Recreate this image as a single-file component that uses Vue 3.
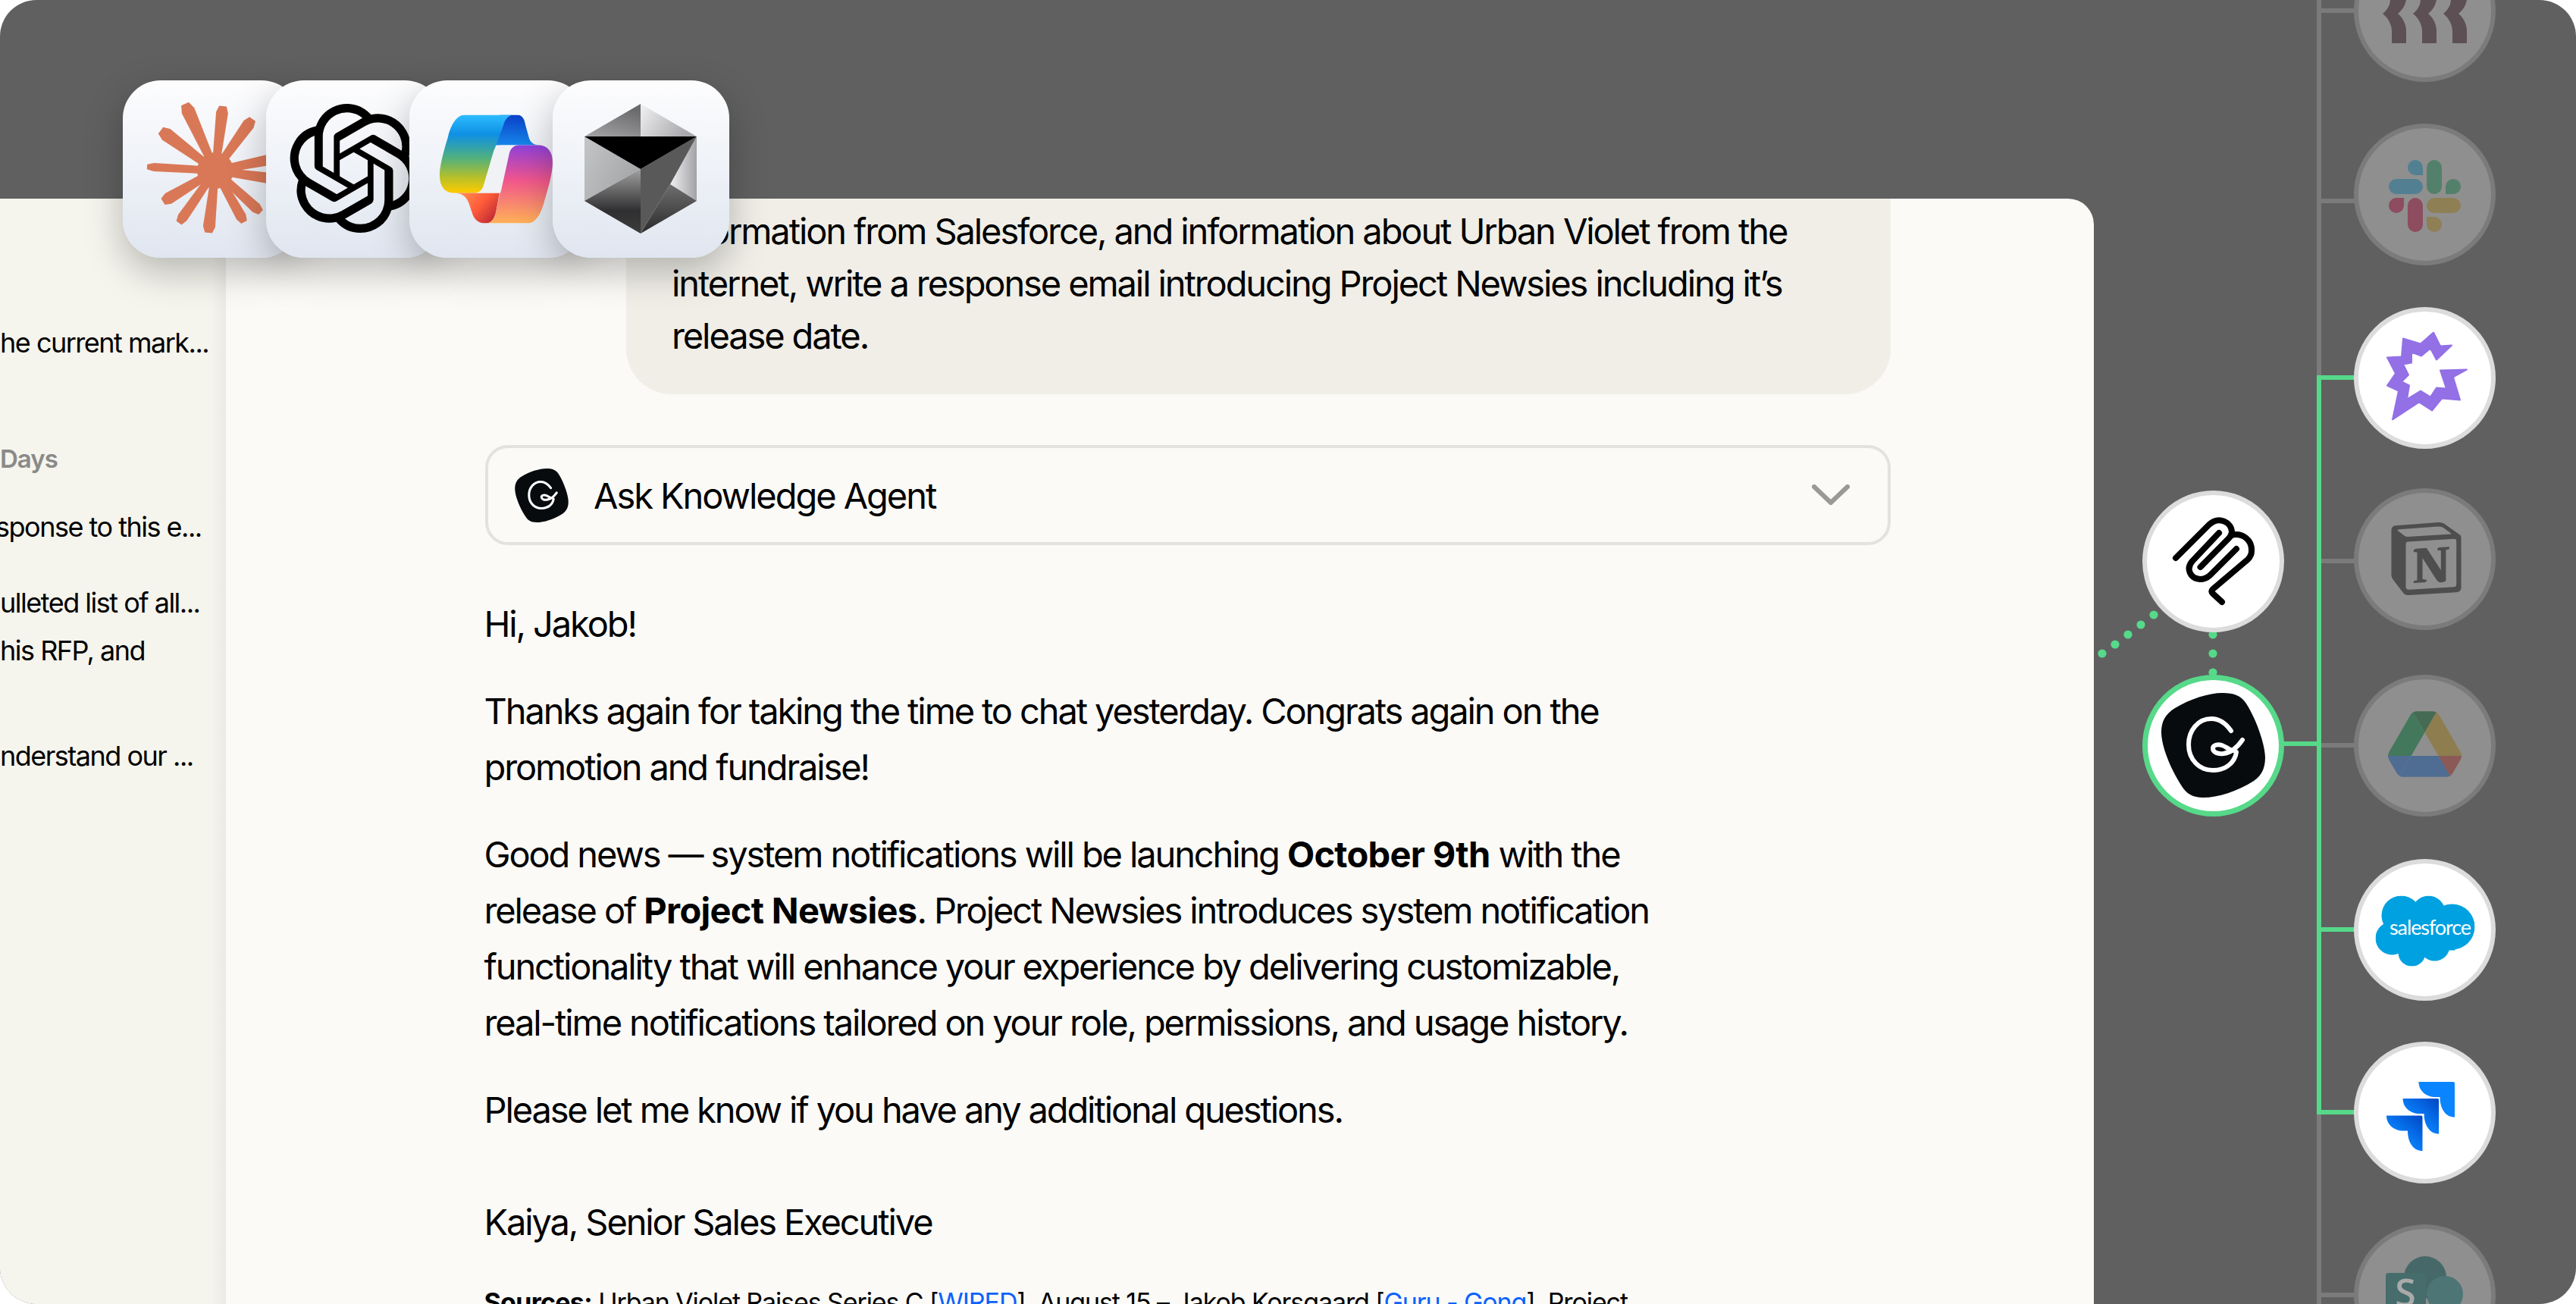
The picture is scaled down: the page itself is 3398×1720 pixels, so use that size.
<script setup>
const claudeTips = [
  [-40, -88, 9], [10, -85, 8], [49, -68, 8], [100, -20, 8], [100, 14, 8], [60, 55, 7], [38, 68, 7],
  [-9, 82, 8], [-48, 69, 7], [-69, 41, 8], [-90, -5, 5.5], [-72, -53, 9]
]
const claudeRays = claudeTips.map(([x, y, w]) => {
  const len = Math.hypot(x, y)
  const nx = -y / len
  const ny = x / len
  const p = (d, k) => `${(x * k + nx * d).toFixed(1)},${(y * k + ny * d).toFixed(1)}`
  return [p(-5, 0.1), p(-w, 0.9), p(-w * 0.6, 1), p(w * 0.6, 1), p(w, 0.9), p(5, 0.1)].join(' ')
})

const nodes = [
  { id: 'rovo', x: 3198, y: 14, dim: true },
  { id: 'slack', x: 3198, y: 256, dim: true },
  { id: 'spark', x: 3198, y: 498 },
  { id: 'notion', x: 3198, y: 737, dim: true },
  { id: 'drive', x: 3198, y: 983, dim: true },
  { id: 'salesforce', x: 3198, y: 1226 },
  { id: 'jira', x: 3198, y: 1467 },
  { id: 'sharepoint', x: 3198, y: 1708, dim: true },
  { id: 'clip', x: 2919, y: 740 },
  { id: 'guru', x: 2919, y: 983, active: true }
]
const nodeStyle = (n) => ({ left: `${n.x - 93.5}px`, top: `${n.y - 93.5}px` })

const greyBranches = [14, 265, 740, 983, 1708]
const vDots = [837, 862, 887]
const dDots = [[2773, 862], [2790, 850], [2807, 837], [2824, 824], [2841, 811]]

const GURU_BLOB = 'M81 0C95 0 105 3 112 14C127 38 137 70 137 85C137 100 132 109 122 116C100 130 75 138 55 138C42 138 33 133 27 123C12 100 0 70 0 52C0 38 5 28 18 20C38 8 62 0 81 0Z'
const GURU_G = 'M92 50C85 40 76 34 66 34C48 34 36 50 36 68C36 88 50 102 68 102C85 102 97 92 99 78M107 62C100 72 92 79 82 80C74 81 68 78 68 73C68 69 74 67 80 69C86 71 90 76 96 76'
</script>

<template>
  <div class="page">
    <div class="window">
      <aside class="sidebar">
        <p class="side-item">he current mark...</p>
        <p class="side-label">Days</p>
        <p class="side-item s2">sponse to this e...</p>
        <p class="side-item s3">ulleted list of all...<br />his RFP, and</p>
        <p class="side-item s4">nderstand our ...</p>
      </aside>
      <main class="main">
        <div class="bubble">
          <p>information from Salesforce, and information about Urban Violet from the internet, write a response email introducing Project Newsies including it’s release date.</p>
        </div>
        <div class="agent">
          <svg class="agent-logo" viewBox="0 0 137 138">
            <path :d="GURU_BLOB" fill="#070b0e" />
            <path :d="GURU_G" fill="none" stroke="#fff" stroke-width="6" stroke-linecap="round" />
          </svg>
          <span class="agent-name">Ask Knowledge Agent</span>
          <svg class="agent-chevron" viewBox="0 0 50 28">
            <path d="M3 3L25 24L47 3" fill="none" stroke="#999997" stroke-width="6" stroke-linecap="round" stroke-linejoin="round" />
          </svg>
        </div>
        <article class="answer">
          <p>Hi, Jakob!</p>
          <p>Thanks again for taking the time to chat yesterday. Congrats again on the promotion and fundraise!</p>
          <p>Good news — system notifications will be launching <b>October 9th</b> with the release of <b>Project Newsies</b>. Project Newsies introduces system notification functionality that will enhance your experience by delivering customizable, real-time notifications tailored on your role, permissions, and usage history.</p>
          <p>Please let me know if you have any additional questions.</p>
          <p class="sign">Kaiya, Senior Sales Executive</p>
          <p class="sources"><b>Sources:</b> Urban Violet Raises Series C [<a>WIRED</a>], August 15 – Jakob Korsgaard [<a>Guru - Gong</a>], Project</p>
        </article>
      </main>
    </div>

    <svg class="wires" width="3398" height="1720" viewBox="0 0 3398 1720">
      <path d="M3059 -5V495M3059 1470V1725" stroke="#7b7b7b" stroke-width="6" fill="none" />
      <path v-for="y in greyBranches" :key="y" :d="`M3062 ${y}H3110`" stroke="#7b7b7b" stroke-width="6" />
      <path d="M3110 498H3059V1467H3110M3059 981H3010M3059 1226H3110" stroke="#56d989" stroke-width="6" fill="none" />
      <circle v-for="y in vDots" :key="y" cx="2919" :cy="y" r="5.6" fill="#56d989" />
      <circle v-for="d in dDots" :key="d[0]" :cx="d[0]" :cy="d[1]" r="5.6" fill="#56d989" />
    </svg>

    <div
      v-for="n in nodes"
      :key="n.id"
      class="node"
      :class="{ dim: n.dim, active: n.active }"
      :style="nodeStyle(n)"
    >
      <svg v-if="n.id === 'rovo'" class="l-rovo" viewBox="0 -2 112 58">
        <path v-for="o in [0, 40, 80]" :key="o" :transform="`translate(${o} 0)`" d="M12 56V40C12 30 6 22 0 17C6 12 10 6 10 -2H31C30 6 26 12 20 17C26 22 31 30 31 40V56Z" fill="#5c5055" />
      </svg>
      <svg v-else-if="n.id === 'slack'" class="l-slack" viewBox="0 0 24 24">
        <path fill="#8d4c5f" d="M5.042 15.165a2.528 2.528 0 0 1-2.52 2.523A2.528 2.528 0 0 1 0 15.165a2.527 2.527 0 0 1 2.522-2.52h2.52v2.52zM6.313 15.165a2.527 2.527 0 0 1 2.521-2.52 2.527 2.527 0 0 1 2.521 2.52v6.313A2.528 2.528 0 0 1 8.834 24a2.528 2.528 0 0 1-2.521-2.522v-6.313z" />
        <path fill="#528092" d="M8.834 5.042a2.528 2.528 0 0 1-2.521-2.52A2.528 2.528 0 0 1 8.834 0a2.528 2.528 0 0 1 2.521 2.522v2.52H8.834zM8.834 6.313a2.528 2.528 0 0 1 2.521 2.521 2.528 2.528 0 0 1-2.521 2.521H2.522A2.528 2.528 0 0 1 0 8.834a2.528 2.528 0 0 1 2.522-2.521h6.312z" />
        <path fill="#53806a" d="M18.956 8.834a2.528 2.528 0 0 1 2.522-2.521A2.528 2.528 0 0 1 24 8.834a2.528 2.528 0 0 1-2.522 2.521h-2.522V8.834zM17.688 8.834a2.528 2.528 0 0 1-2.523 2.521 2.527 2.527 0 0 1-2.52-2.521V2.522A2.527 2.527 0 0 1 15.165 0a2.528 2.528 0 0 1 2.523 2.522v6.312z" />
        <path fill="#8e7f55" d="M15.165 18.956a2.528 2.528 0 0 1 2.523 2.522A2.528 2.528 0 0 1 15.165 24a2.527 2.527 0 0 1-2.52-2.522v-2.522h2.52zM15.165 17.688a2.527 2.527 0 0 1-2.52-2.523 2.526 2.526 0 0 1 2.52-2.52h6.313A2.527 2.527 0 0 1 24 15.165a2.528 2.528 0 0 1-2.522 2.523h-6.313z" />
      </svg>
      <svg v-else-if="n.id === 'spark'" class="l-spark" viewBox="0 0 107 117">
        <path fill="#9370e6" stroke="#9370e6" stroke-width="2" stroke-linejoin="round" d="M62 1L71 19L86 18L66 37L58 22L46 32L33 27L33 41L22 43L29 57L20 66L30 71L27 89L45 78L58 86L66 74L79 75L71 51L106 50L88 60L97 90L73 88L60 104L43 93L8 116L16 78L1 71L12 55L1 34L20 33L22 9L45 16Z" />
      </svg>
      <svg v-else-if="n.id === 'notion'" class="l-notion" viewBox="0 0 24 24">
        <path fill="#4d4e4d" d="M4.459 4.208c.746.606 1.026.56 2.428.466l13.215-.793c.28 0 .047-.28-.046-.326L17.86 1.968c-.42-.326-.981-.7-2.055-.607L3.01 2.295c-.466.046-.56.28-.374.466zm.793 3.08v13.904c0 .747.373 1.027 1.214.98l14.523-.84c.841-.046.935-.56.935-1.167V6.354c0-.606-.233-.933-.748-.887l-15.177.887c-.56.047-.747.327-.747.933zm14.337.745c.093.42 0 .84-.42.888l-.7.14v10.264c-.608.327-1.168.514-1.635.514-.748 0-.935-.234-1.495-.933l-4.577-7.186v6.952L12.21 19s0 .84-1.168.84l-3.222.186c-.093-.186 0-.653.327-.746l.84-.233V9.854L7.822 9.76c-.094-.42.14-1.026.793-1.073l3.456-.233 4.764 7.279v-6.44l-1.215-.139c-.093-.514.28-.887.747-.933zM1.936 1.035l13.31-.98c1.634-.14 2.055-.047 3.082.7l4.249 2.986c.7.513.934.653.934 1.213v16.378c0 1.026-.373 1.634-1.68 1.726l-15.458.934c-.98.047-1.448-.093-1.962-.747l-3.129-4.06c-.56-.747-.793-1.306-.793-1.96V2.667c0-.839.374-1.54 1.447-1.632z" />
      </svg>
      <svg v-else-if="n.id === 'drive'" class="l-drive" viewBox="0 0 87.3 78">
        <path d="m6.6 66.85 3.85 6.65c.8 1.4 1.95 2.5 3.3 3.3l13.75-23.8h-27.5c0 1.55.4 3.1 1.2 4.5z" fill="#4f6d93" />
        <path d="m43.65 25-13.75-23.8c-1.35.8-2.5 1.9-3.3 3.3l-25.4 44a9.06 9.06 0 0 0 -1.2 4.5h27.5z" fill="#43785c" />
        <path d="m73.55 76.8c1.35-.8 2.5-1.9 3.3-3.3l1.6-2.75 7.65-13.25c.8-1.4 1.2-2.95 1.2-4.5h-27.502l5.852 11.5z" fill="#8b5a56" />
        <path d="m43.65 25 13.75-23.8c-1.35-.8-2.9-1.2-4.5-1.2h-18.5c-1.6 0-3.15.45-4.5 1.2z" fill="#466b54" />
        <path d="m59.8 53h-32.3l-13.75 23.8c1.35.8 2.9 1.2 4.5 1.2h50.8c1.6 0 3.15-.45 4.5-1.2z" fill="#4f6d93" />
        <path d="m73.4 26.5-12.7-22c-.8-1.4-1.95-2.5-3.3-3.3l-13.75 23.8 16.15 28h27.45c0-1.55-.4-3.1-1.2-4.5z" fill="#8e7d4f" />
      </svg>
      <svg v-else-if="n.id === 'salesforce'" class="l-sf" viewBox="0 0 131 93">
        <g fill="#00a1e0">
          <circle cx="34" cy="26" r="26" /><circle cx="70" cy="22" r="22" /><circle cx="101" cy="41" r="30" />
          <circle cx="78" cy="66" r="20" /><circle cx="48" cy="75" r="18" /><circle cx="22" cy="56" r="22" />
          <rect x="25" y="22" width="80" height="50" />
        </g>
        <text class="sf-text" x="18.5" y="51">salesforce</text>
      </svg>
      <svg v-else-if="n.id === 'jira'" class="l-jira" viewBox="0 0 90 91">
        <defs>
          <linearGradient id="jg" x1="1" y1="0" x2="0.4" y2="0.7">
            <stop offset="0" stop-color="#0047c4" /><stop offset="1" stop-color="#0a84ff" />
          </linearGradient>
        </defs>
        <path transform="translate(42.5 0)" fill="#0a84ff" d="M0 0H45.5A2 2 0 0 1 47.5 2V46.6C36 46.6 28 36 28 20H22C10 20 0 12 0 0Z" />
        <path transform="translate(21.6 22)" fill="url(#jg)" d="M0 0H45.5A2 2 0 0 1 47.5 2V46.6C36 46.6 28 36 28 20H22C10 20 0 12 0 0Z" />
        <path transform="translate(0 44.4)" fill="url(#jg)" d="M0 0H45.5A2 2 0 0 1 47.5 2V46.6C36 46.6 28 36 28 20H22C10 20 0 12 0 0Z" />
      </svg>
      <svg v-else-if="n.id === 'sharepoint'" class="l-sp" viewBox="0 0 110 110">
        <circle cx="52" cy="30" r="28" fill="#466868" />
        <circle cx="78" cy="52" r="24" fill="#4d7575" />
        <rect x="0" y="24" width="53" height="53" rx="4" fill="#466c6c" />
        <text class="sp-text" x="26" y="68">S</text>
      </svg>
      <svg v-else-if="n.id === 'clip'" class="l-clip" viewBox="0 0 120 130">
        <g fill="none" stroke="#000" stroke-width="8" stroke-linecap="round" stroke-linejoin="round">
          <path d="M11 61L55 17C68 5 85 14 85 27C85 31 83 33 81 35L43.5 73" />
          <path d="M68 28L33 65C24 75 30 88 43 89C49 89 54 86 57 83L91 49" />
          <path d="M84 31C100 27 112 38 111 52C111 56 109 60 106 63L60 102Q57 105 60 108L72 119" />
        </g>
      </svg>
      <svg v-else-if="n.id === 'guru'" class="l-guru" viewBox="0 0 137 138">
        <path :d="GURU_BLOB" fill="#070b0e" />
        <path :d="GURU_G" fill="none" stroke="#fff" stroke-width="6" stroke-linecap="round" />
      </svg>
    </div>

    <div class="dock">
      <div class="tile">
        <svg class="t-claude" viewBox="-100 -100 200 200">
          <polygon v-for="(r, i) in claudeRays" :key="i" :points="r" fill="#d97857" />
          <circle r="24" fill="#d97857" />
        </svg>
      </div>
      <div class="tile">
        <svg class="t-gpt" viewBox="0 0 24 24">
          <path fill="#000" d="M22.2819 9.8211a5.9847 5.9847 0 0 0-.5157-4.9108 6.0462 6.0462 0 0 0-6.5098-2.9A6.0651 6.0651 0 0 0 4.9807 4.1818a5.9847 5.9847 0 0 0-3.9977 2.9 6.0462 6.0462 0 0 0 .7427 7.0966 5.98 5.98 0 0 0 .511 4.9107 6.051 6.051 0 0 0 6.5146 2.9001A5.9847 5.9847 0 0 0 13.2599 24a6.0557 6.0557 0 0 0 5.7718-4.2058 5.9894 5.9894 0 0 0 3.9977-2.9001 6.0557 6.0557 0 0 0-.7475-7.0729zm-9.022 12.6081a4.4755 4.4755 0 0 1-2.8764-1.0408l.1419-.0804 4.7783-2.7582a.7948.7948 0 0 0 .3927-.6813v-6.7369l2.02 1.1686a.071.071 0 0 1 .038.052v5.5826a4.504 4.504 0 0 1-4.4945 4.4944zm-9.6607-4.1254a4.4708 4.4708 0 0 1-.5346-3.0137l.142.0852 4.783 2.7582a.7712.7712 0 0 0 .7806 0l5.8428-3.3685v2.3324a.0804.0804 0 0 1-.0332.0615L9.74 19.9502a4.4992 4.4992 0 0 1-6.1408-1.6464zM2.3408 7.8956a4.485 4.485 0 0 1 2.3655-1.9728V11.6a.7664.7664 0 0 0 .3879.6765l5.8144 3.3543-2.0201 1.1685a.0757.0757 0 0 1-.071 0l-4.8303-2.7865A4.504 4.504 0 0 1 2.3408 7.872zm16.5963 3.8558L13.1038 8.364 15.1192 7.2a.0757.0757 0 0 1 .071 0l4.8303 2.7913a4.4944 4.4944 0 0 1-.6765 8.1042v-5.6772a.79.79 0 0 0-.407-.667zm2.0107-3.0231l-.142-.0852-4.7735-2.7818a.7759.7759 0 0 0-.7854 0L9.409 9.2297V6.8974a.0662.0662 0 0 1 .0284-.0615l4.8303-2.7866a4.4992 4.4992 0 0 1 6.6802 4.66zM8.3065 12.863l-2.02-1.1638a.0804.0804 0 0 1-.038-.0567V6.0742a4.4992 4.4992 0 0 1 7.3757-3.4537l-.142.0805L8.704 5.459a.7948.7948 0 0 0-.3927.6813zm1.0976-2.3654l2.602-1.4998 2.6069 1.4998v2.9994l-2.5974 1.4997-2.6067-1.4997Z" />
        </svg>
      </div>
      <div class="tile">
        <svg class="t-copilot" viewBox="0 0 151 143">
          <defs>
            <linearGradient id="cpL" x1="0" y1="0" x2="0" y2="1">
              <stop offset="0" stop-color="#2ebcff" /><stop offset="0.25" stop-color="#0e90e4" />
              <stop offset="0.55" stop-color="#50b07e" /><stop offset="0.8" stop-color="#b5c02a" /><stop offset="1" stop-color="#ffcb00" />
            </linearGradient>
            <linearGradient id="cpD" x1="0" y1="0" x2="0" y2="1">
              <stop offset="0" stop-color="#0a3fc8" /><stop offset="1" stop-color="#1786ea" />
            </linearGradient>
            <linearGradient id="cpR" x1="0" y1="0" x2="0" y2="1">
              <stop offset="0" stop-color="#9040da" /><stop offset="0.45" stop-color="#f1568c" /><stop offset="1" stop-color="#ffb157" />
            </linearGradient>
            <linearGradient id="cpO" x1="0" y1="0" x2="1" y2="0.6">
              <stop offset="0" stop-color="#ff9a55" /><stop offset="0.6" stop-color="#ff5b3a" /><stop offset="1" stop-color="#c42f35" />
            </linearGradient>
          </defs>
          <path fill="url(#cpD)" d="M80 0H103C110 0 113 6 114 13L119 31C121 37 126 40 133 40H70Z" />
          <path fill="url(#cpL)" d="M34 0H99C92 0 87 6 85 14L72 49L59 93C57 100 54 103 48 103H20C8 103 1 95 1 80C1 70 4 55 12 29C16 12 24 0 34 0Z" />
          <path fill="url(#cpO)" d="M20 103H80L75 129C73 137 69 143 62 143H60C52 143 46 137 44 130L40 118C37 108 30 103 20 103Z" />
          <path fill="url(#cpR)" d="M117 143H62C69 143 73 137 75 129L90 60C92 48 96 40 103 40H131C143 40 150 48 150 63C150 73 147 88 139 114C135 130 128 143 117 143Z" />
          <path fill="#f0f2f6" d="M83 40H106C100 40 95 43 93 50L82 100C81.5 102 81 103 80 103H46C52 103 57 100 59 93L72 49C73 44 77 40 83 40Z" />
        </svg>
      </div>
      <div class="tile">
        <svg class="t-crystal" viewBox="0 0 148 171">
          <defs>
            <linearGradient id="crA" x1="0.5" y1="0" x2="0" y2="1"><stop offset="0" stop-color="#6b6b6d" /><stop offset="1" stop-color="#a5a5a7" /></linearGradient>
            <linearGradient id="crB" x1="0" y1="0" x2="1" y2="0.4"><stop offset="0" stop-color="#f2f2f4" /><stop offset="1" stop-color="#a9a9ad" /></linearGradient>
            <linearGradient id="crC" x1="0" y1="0" x2="1" y2="0.6"><stop offset="0" stop-color="#c4c5c7" /><stop offset="1" stop-color="#a4a5a7" /></linearGradient>
            <linearGradient id="crD" x1="0" y1="0.5" x2="1" y2="0.5"><stop offset="0" stop-color="#f0f0f2" /><stop offset="1" stop-color="#a2a2a6" /></linearGradient>
            <linearGradient id="crE" x1="0.5" y1="0" x2="0.5" y2="1"><stop offset="0" stop-color="#a0a0a0" /><stop offset="0.65" stop-color="#2f2f31" /><stop offset="1" stop-color="#3d3d3d" /></linearGradient>
            <linearGradient id="crF" x1="0.5" y1="0" x2="0.5" y2="1"><stop offset="0" stop-color="#6e6e6e" /><stop offset="1" stop-color="#2a2a2c" /></linearGradient>
          </defs>
          <polygon points="74,0 0,43 74,43" fill="url(#crA)" />
          <polygon points="74,0 148,43 74,43" fill="url(#crB)" />
          <polygon points="0,43 74,86 0,128" fill="url(#crC)" />
          <polygon points="148,43 148,128 113,106" fill="url(#crD)" />
          <polygon points="113,106 148,128 74,171" fill="url(#crF)" />
          <polygon points="0,128 74,86 74,171" fill="url(#crE)" />
          <polygon points="74,86 148,43 113,106 74,171" fill="#595959" />
          <polygon points="0,43 148,43 74,86" fill="#000" />
        </svg>
      </div>
    </div>
  </div>
</template>

<style>
html, body { margin: 0; background: #fff; }
</style>

<style scoped>
.page {
  position: relative;
  width: 3398px;
  height: 1720px;
  box-sizing: border-box;
  padding-top: 262px;
  background: #606060;
  border-radius: 48px;
  overflow: hidden;
  font-family: Inter, "Liberation Sans", sans-serif;
  color: #000;
}
.window {
  display: flex;
  width: 2762px;
  height: 1458px;
  border-radius: 0 34px 0 48px;
  overflow: hidden;
  background: #fbfaf7;
}
.sidebar {
  flex: none;
  width: 298px;
  box-sizing: border-box;
  padding-top: 159px;
  background: linear-gradient(to left, #ebeae4, #f5f4ed 20px);
  overflow: hidden;
  font-size: 36px;
  letter-spacing: -1.5px;
  white-space: nowrap;
}
.sidebar p { margin: 0; line-height: 63px; }
.sidebar .side-label { margin-top: 99px; color: #8a8a88; font-weight: 600; font-size: 33px; line-height: 44px; letter-spacing: -1px; }
.sidebar .s2 { margin: 37px 0 0 -6px; }
.sidebar .s3 { margin-top: 37px; }
.sidebar .s4 { margin-top: 76px; }
.main {
  flex: 1;
  min-width: 0;
  box-sizing: border-box;
  padding-left: 342px;
}
.bubble {
  box-sizing: border-box;
  height: 258px;
  width: 1668px;
  margin-left: 186px;
  padding: 8px 60px 0;
  background: #f0eee7;
  border-radius: 0 0 60px 60px;
}
.bubble p { margin: 0; font-size: 47px; line-height: 69px; letter-spacing: -2.1px; }
.agent {
  display: flex;
  align-items: center;
  box-sizing: border-box;
  width: 1854px;
  height: 132px;
  margin-top: 67px;
  padding: 0 50px 0 35px;
  border: 4px solid #e2e2df;
  border-radius: 30px;
}
.agent-logo { width: 71px; height: 71px; margin-right: 33px; flex: none; }
.agent-name { flex: 1; font-size: 47px; letter-spacing: -2.05px; }
.agent-chevron { width: 50px; height: 28px; flex: none; }
.answer { width: 1600px; margin: 67px 0 0 -1.5px; font-size: 47px; line-height: 74px; letter-spacing: -2.12px; }
.answer p { margin: 0 0 41px; }
.answer b { font-weight: 700; letter-spacing: -0.7px; }
.answer .sign { margin-top: 74px; margin-bottom: 44px; }
.answer .sources { font-size: 34px; line-height: 50px; letter-spacing: -1.1px; white-space: nowrap; }
.sources a { color: #0c62fb; }

.wires { position: absolute; left: 0; top: 0; pointer-events: none; }
.node {
  position: absolute;
  box-sizing: border-box;
  width: 187px;
  height: 187px;
  display: flex;
  align-items: center;
  justify-content: center;
  border: 6px solid #dcdcdc;
  border-radius: 50%;
  background: #fff;
}
.node.dim { background: #8f8f8f; border-color: #7b7b7b; }
.node.active { border: 7px solid #56d989; }
.l-rovo { position: absolute; width: 112px; height: 58px; left: 32px; top: 72px; }
.l-slack { width: 95px; height: 95px; transform: translateY(2px); }
.l-spark { width: 107px; height: 117px; transform: translate(3px, -2.5px); }
.l-notion { width: 96px; height: 96px; transform: translateX(2.5px); }
.l-drive { width: 97px; height: 87px; transform: translateY(-2px); }
.l-sf { width: 131px; height: 93px; transform: translate(.5px, 1.5px); }
.sf-text { font-family: Lato, sans-serif; font-size: 27px; fill: #fff; letter-spacing: -1.1px; }
.l-jira { width: 90px; height: 91px; transform: translate(-5px, 5px); }
.l-sp { position: absolute; width: 110px; height: 110px; left: 36px; top: 34px; }
.sp-text { font-family: "Open Sans", sans-serif; font-size: 50px; font-weight: 600; fill: #a9aaa9; text-anchor: middle; }
.l-clip { width: 120px; height: 130px; }
.l-guru { width: 137px; height: 138px; }

.dock { position: absolute; left: 162px; top: 106px; display: flex; }
.tile {
  position: relative;
  flex: none;
  width: 233px;
  height: 234px;
  margin-right: -44px;
  display: flex;
  align-items: center;
  justify-content: center;
  border-radius: 50px;
  background: linear-gradient(to bottom, #fdfdfe, #e0e6f0);
  box-shadow: 0 18px 50px rgba(0, 0, 0, 0.26);
}
.t-claude { width: 200px; height: 200px; transform: translate(5px, 2px); flex: none; }
.t-gpt { width: 170px; height: 170px; flex: none; transform: translate(-1.5px, -1px); }
.t-copilot { width: 151px; height: 143px; flex: none; transform: translate(-2px, -.5px); }
.t-crystal { width: 148px; height: 171px; flex: none; transform: translate(-1px, -1px); }
</style>
